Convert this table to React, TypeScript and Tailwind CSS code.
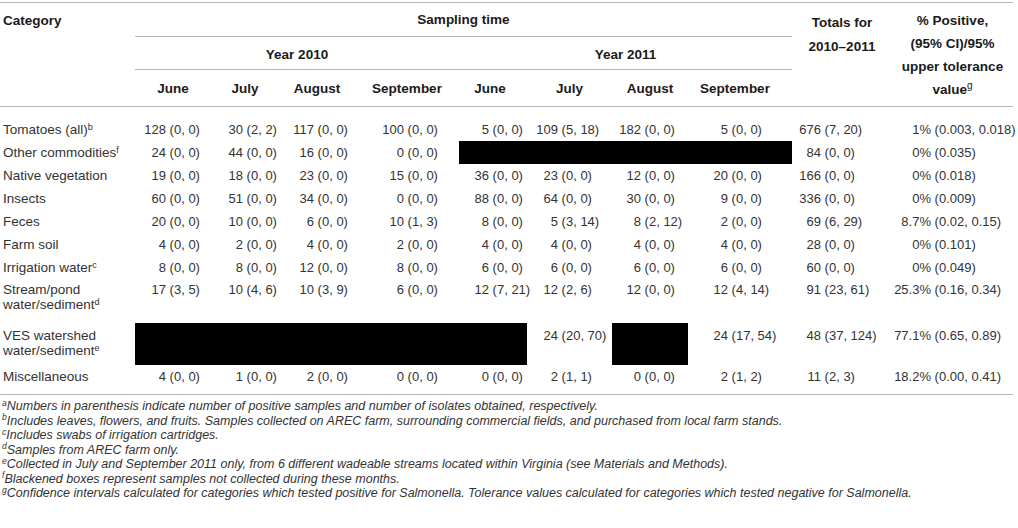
type Cell = string | { black: number };

type Row = {
  label: string[];
  sup: string;
  cells: Cell[];
  tall?: string;
};

const cols = "grid grid-cols-[135px_76px_68px_76px_104px_68px_85px_76px_104px_100px_121px]";

// width of the number part, so that values line up on the end of the first number
const anchors = [
  "w-[31px]",
  "w-[32px]",
  "w-[35px]",
  "w-[49px]",
  "w-[30px]",
  "w-[31px]",
  "w-[29px]",
  "w-[40px]",
  "w-[29px]",
  "w-[39px]",
];

const spans: Record<number, string> = {
  1: "col-span-1",
  4: "col-span-4",
  5: "col-span-5",
};

const rows: Row[] = [
  {
    label: ["Tomatoes (all)"],
    sup: "b",
    cells: ["128 (0, 0)", "30 (2, 2)", "117 (0, 0)", "100 (0, 0)", "5 (0, 0)", "109 (5, 18)", "182 (0, 0)", "5 (0, 0)", "676 (7, 20)", "1% (0.003, 0.018)"],
  },
  {
    label: ["Other commodities"],
    sup: "f",
    cells: ["24 (0, 0)", "44 (0, 0)", "16 (0, 0)", "0 (0, 0)", { black: 4 }, "84 (0, 0)", "0% (0.035)"],
  },
  {
    label: ["Native vegetation"],
    sup: "",
    cells: ["19 (0, 0)", "18 (0, 0)", "23 (0, 0)", "15 (0, 0)", "36 (0, 0)", "23 (0, 0)", "12 (0, 0)", "20 (0, 0)", "166 (0, 0)", "0% (0.018)"],
  },
  {
    label: ["Insects"],
    sup: "",
    cells: ["60 (0, 0)", "51 (0, 0)", "34 (0, 0)", "0 (0, 0)", "88 (0, 0)", "64 (0, 0)", "30 (0, 0)", "9 (0, 0)", "336 (0, 0)", "0% (0.009)"],
  },
  {
    label: ["Feces"],
    sup: "",
    cells: ["20 (0, 0)", "10 (0, 0)", "6 (0, 0)", "10 (1, 3)", "8 (0, 0)", "5 (3, 14)", "8 (2, 12)", "2 (0, 0)", "69 (6, 29)", "8.7% (0.02, 0.15)"],
  },
  {
    label: ["Farm soil"],
    sup: "",
    cells: ["4 (0, 0)", "2 (0, 0)", "4 (0, 0)", "2 (0, 0)", "4 (0, 0)", "4 (0, 0)", "4 (0, 0)", "4 (0, 0)", "28 (0, 0)", "0% (0.101)"],
  },
  {
    label: ["Irrigation water"],
    sup: "c",
    cells: ["8 (0, 0)", "8 (0, 0)", "12 (0, 0)", "8 (0, 0)", "6 (0, 0)", "6 (0, 0)", "6 (0, 0)", "6 (0, 0)", "60 (0, 0)", "0% (0.049)"],
  },
  {
    label: ["Stream/pond", "water/sediment"],
    sup: "d",
    tall: "h-[44px] pt-[3px]",
    cells: ["17 (3, 5)", "10 (4, 6)", "10 (3, 9)", "6 (0, 0)", "12 (7, 21)", "12 (2, 6)", "12 (0, 0)", "12 (4, 14)", "91 (23, 61)", "25.3% (0.16, 0.34)"],
  },
  {
    label: ["VES watershed", "water/sediment"],
    sup: "e",
    tall: "h-[42px] pt-[5px]",
    cells: [{ black: 5 }, "24 (20, 70)", { black: 1 }, "24 (17, 54)", "48 (37, 124)", "77.1% (0.65, 0.89)"],
  },
  {
    label: ["Miscellaneous"],
    sup: "",
    cells: ["4 (0, 0)", "1 (0, 0)", "2 (0, 0)", "0 (0, 0)", "0 (0, 0)", "2 (1, 1)", "0 (0, 0)", "2 (1, 2)", "11 (2, 3)", "18.2% (0.00, 0.41)"],
  },
];

const notes = [
  ["a", "Numbers in parenthesis indicate number of positive samples and number of isolates obtained, respectively."],
  ["b", "Includes leaves, flowers, and fruits. Samples collected on AREC farm, surrounding commercial fields, and purchased from local farm stands."],
  ["c", "Includes swabs of irrigation cartridges."],
  ["d", "Samples from AREC farm only."],
  ["e", "Collected in July and September 2011 only, from 6 different wadeable streams located within Virginia (see Materials and Methods)."],
  ["f", "Blackened boxes represent samples not collected during these months."],
  ["g", "Confidence intervals calculated for categories which tested positive for Salmonella. Tolerance values calculated for categories which tested negative for Salmonella."],
];

const months = [
  { name: "June", cls: "w-[76px]" },
  { name: "July", cls: "w-[68px]" },
  { name: "August", cls: "w-[76px]" },
  { name: "September", cls: "w-[104px]" },
];

const months2011 = [
  { name: "June", cls: "w-[68px] pr-[6px]" },
  { name: "July", cls: "w-[85px]" },
  { name: "August", cls: "w-[76px]" },
  { name: "September", cls: "w-[104px] pr-[10px]" },
];

function Value({ text, col }: { text: string; col: number }) {
  const i = text.indexOf(" ");
  return (
    <div className="flex whitespace-pre">
      <span className={`${anchors[col]} shrink-0 text-right`}>{text.slice(0, i)}</span>
      <span>{text.slice(i)}</span>
    </div>
  );
}

function DataRow({ row }: { row: Row }) {
  const height = row.tall ?? "h-[23px] pt-[4px]";
  let col = 0;
  return (
    <div className={cols}>
      <div className={`${height} pl-[3px] text-[13.5px]`}>
        {row.label.map((line, i) => (
          <div key={i}>
            {line}
            {i === row.label.length - 1 && row.sup && <sup className="text-[9px]">{row.sup}</sup>}
          </div>
        ))}
      </div>
      {row.cells.map((cell, i) => {
        if (typeof cell !== "string") {
          col += cell.black;
          return <div key={i} className={`${spans[cell.black]} bg-black`} />;
        }
        const c = col;
        col += 1;
        return (
          <div key={i} className={height}>
            <Value text={cell} col={c} />
          </div>
        );
      })}
    </div>
  );
}

export default function App() {
  return (
    <div className="bg-white w-[1018px] h-[528px] pt-[2px] font-['Liberation_Sans',Arial,sans-serif] text-[#333]">
      <div className="w-[1013px]">
        <div className="flex border-t border-b border-[#b5b5b5] text-[13.5px] font-bold text-[#1a1a1a] leading-[17px]">
          <div className="w-[135px] pl-[3px] pt-[9px]">Category</div>
          <div className="w-[657px]">
            <div className="h-[34px] flex items-center justify-center border-b border-[#b5b5b5]">Sampling time</div>
            <div className="h-[33px] flex border-b border-[#b5b5b5]">
              <div className="w-[324px] flex items-center justify-center pt-[2px]">Year 2010</div>
              <div className="w-[333px] flex items-center justify-center pt-[2px]">Year 2011</div>
            </div>
            <div className="h-[36px] flex items-center">
              {months.map((m) => (
                <div key={m.name + "10"} className={`${m.cls} text-center`}>{m.name}</div>
              ))}
              {months2011.map((m) => (
                <div key={m.name + "11"} className={`${m.cls} text-center`}>{m.name}</div>
              ))}
            </div>
          </div>
          <div className="w-[100px] pt-[8px] text-center leading-[24px]">
            <div>Totals for</div>
            <div>2010–2011</div>
          </div>
          <div className="w-[121px] pt-[6px] text-center leading-[23px]">
            <div>% Positive,</div>
            <div>(95% CI)/95%</div>
            <div>upper tolerance</div>
            <div>
              value<sup className="text-[10px] font-normal">g</sup>
            </div>
          </div>
        </div>
        <div className="pt-[11px] pb-[6px] border-b border-[#b5b5b5] text-[13px] leading-[15px]">
          {rows.map((row) => (
            <DataRow key={row.label.join(" ")} row={row} />
          ))}
        </div>
        <div className="pt-[4px] pl-[2px] italic text-[12.5px] leading-[14.5px] text-[#333]">
          {notes.map(([k, t]) => (
            <div key={k}>
              <sup className="text-[8.5px]">{k}</sup>
              {t}
            </div>
          ))}
        </div>
      </div>
    </div>
  );
}
